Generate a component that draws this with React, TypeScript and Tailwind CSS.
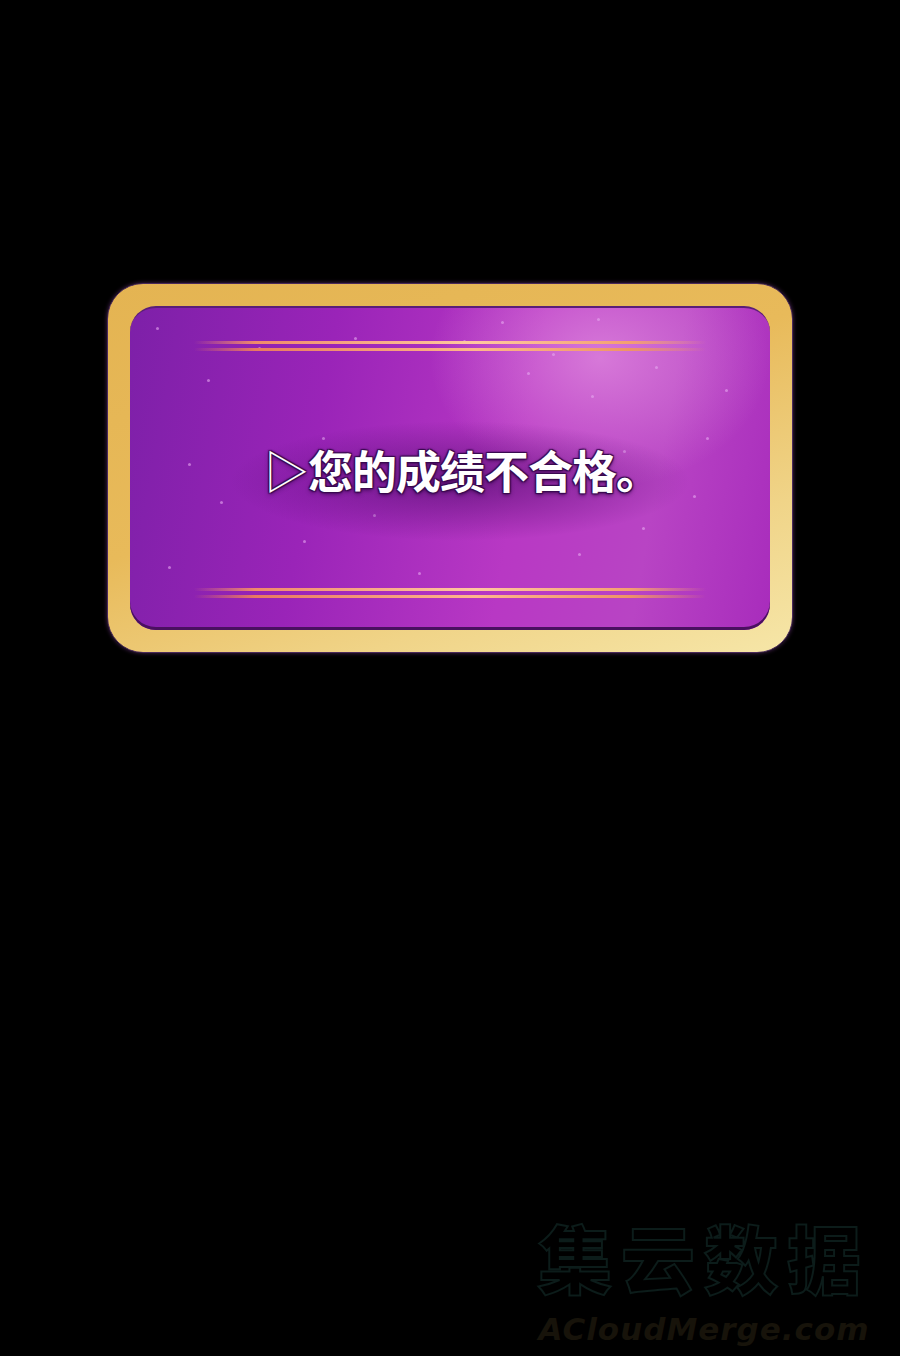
import React from "react";

const sparkles = [
  [4, 6], [12, 22], [20, 12], [35, 9], [58, 4], [66, 14], [73, 3], [82, 18], [90, 40], [72, 27],
  [62, 20], [9, 48], [14, 60], [27, 72], [38, 64], [80, 68], [88, 58], [70, 76], [45, 82], [6, 80],
  [52, 10], [93, 25], [30, 40], [77, 44],
];

function GoldLines() {
  return (
    <div className="flex flex-col gap-[4px] px-[64px]">
      <div className="h-[3px] w-full bg-[linear-gradient(90deg,rgba(255,160,120,0)_0%,#f08a6a_12%,#ffc8a0_55%,#f4a070_85%,rgba(255,160,120,0)_100%)]" />
      <div className="h-[3px] w-full bg-[linear-gradient(90deg,rgba(255,160,120,0)_0%,#e97a60_12%,#ffb88c_55%,#ee9466_85%,rgba(255,160,120,0)_100%)]" />
    </div>
  );
}

export default function App() {
  return (
    <div className="relative h-[1356px] w-[900px] overflow-hidden bg-black font-['Noto_Sans_CJK_SC',sans-serif]">
      <div className="h-[283px]" />
      <div className="mx-[107px] rounded-[36px] border border-[#4a2a5a] bg-[linear-gradient(160deg,#e4b452_0%,#e8ba5a_45%,#f0d488_75%,#f6e6a8_100%)] p-[22px] shadow-[0_0_4px_rgba(120,60,140,0.6)]">
        <div className="relative h-[324px] overflow-hidden rounded-[26px] border-t-2 border-[#5a1e78] bg-[linear-gradient(100deg,#7d20a8_0%,#9a24b8_30%,#b838c4_60%,#b844c4_80%,#a82cbc_100%)] shadow-[inset_0_-3px_0_#4a1060]">
          <div className="absolute left-[300px] top-[-80px] h-[260px] w-[340px] rounded-full bg-[radial-gradient(closest-side,rgba(235,160,230,0.6),rgba(235,160,230,0))]" />
          {sparkles.map(([x, y], i) => (
            <div
              key={i}
              className="absolute h-[3px] w-[3px] rounded-full bg-[#e6a8f0] opacity-60"
              style={{ left: `${x}%`, top: `${y}%` }}
            />
          ))}
          <div className="relative flex h-full flex-col justify-between pb-[32px] pt-[33px]">
            <GoldLines />
            <div className="relative flex justify-center">
              <div className="absolute left-[100px] top-[-26px] h-[120px] w-[460px] rounded-full bg-[radial-gradient(closest-side,rgba(70,8,100,0.6),rgba(70,8,100,0))]" />
              <div className="relative pl-[24px] text-[45px] font-bold leading-none tracking-[-1px] text-white [text-shadow:0_0_2px_#3a0a50,1px_1px_1px_#3a0a50,-1px_-1px_1px_#3a0a50,1px_-1px_1px_#3a0a50,-1px_1px_1px_#3a0a50,0_2px_4px_rgba(40,0,60,0.7)]">
                <span className="font-normal">▷</span>您的成绩不合格。
              </div>
            </div>
            <GoldLines />
          </div>
        </div>
      </div>
      <div className="absolute left-[518px] top-[1216px] flex w-[372px] flex-col items-center">
        <div className="h-[80px] text-[74px] font-black leading-[80px] tracking-[9px] text-black [-webkit-text-stroke:2px_#0c1c1a]">
          集云数据
        </div>
        <div className="mt-[18px] font-['DejaVu_Sans',sans-serif] text-[31px] font-bold italic leading-none tracking-[1px] text-[#17130a]">
          ACloudMerge.com
        </div>
      </div>
    </div>
  );
}
